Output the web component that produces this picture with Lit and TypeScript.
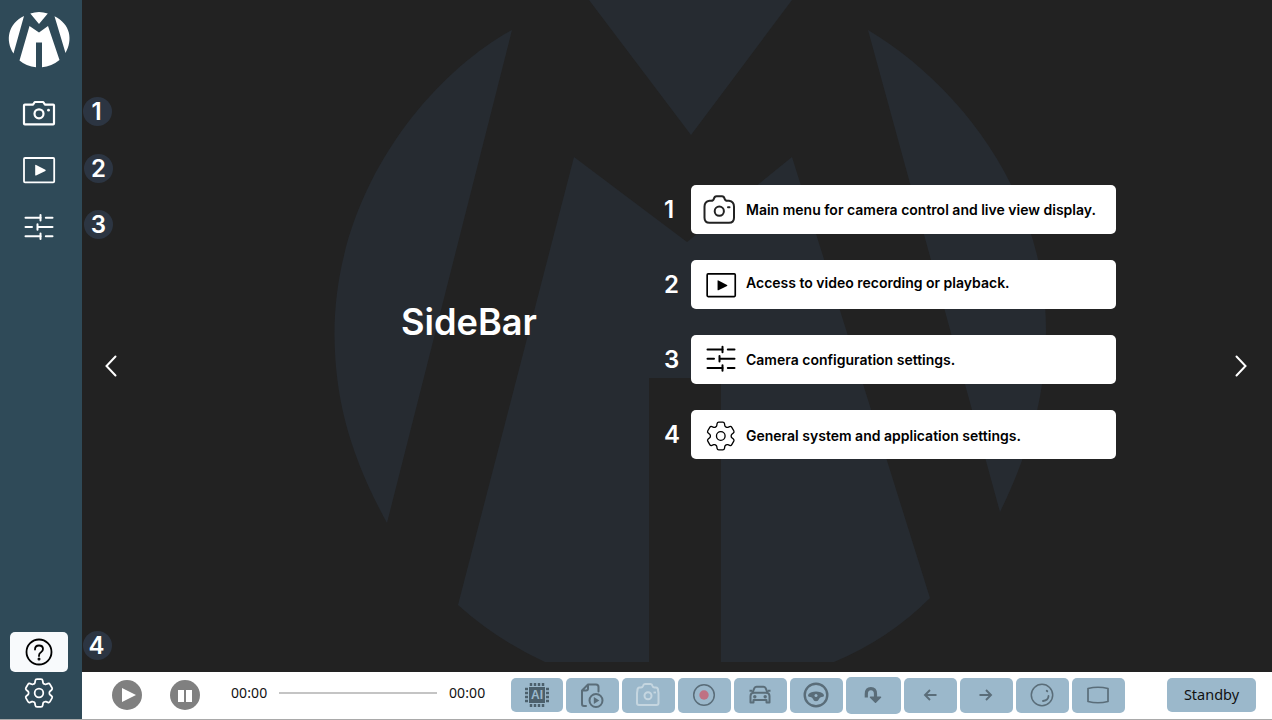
import { LitElement, html, css, svg } from "lit";
import { customElement } from "lit/decorators.js";
import { classMap } from "lit/directives/class-map.js";

const GEAR =
  "M9.594 3.94c.09-.542.56-.94 1.11-.94h2.593c.55 0 1.02.398 1.11.94l.213 1.281c.063.374.313.686.645.87.074.04.147.083.22.127.325.196.72.257 1.075.124l1.217-.456a1.125 1.125 0 0 1 1.37.49l1.296 2.247a1.125 1.125 0 0 1-.26 1.431l-1.003.827c-.293.241-.438.613-.43.992a7.723 7.723 0 0 1 0 .255c-.008.378.137.75.43.991l1.004.827c.424.35.534.955.26 1.43l-1.298 2.247a1.125 1.125 0 0 1-1.369.491l-1.217-.456c-.355-.133-.75-.072-1.076.124a6.47 6.47 0 0 1-.22.128c-.331.183-.581.495-.644.869l-.213 1.281c-.09.543-.56.94-1.11.94h-2.594c-.55 0-1.019-.398-1.11-.94l-.213-1.281c-.062-.374-.312-.686-.644-.87a6.52 6.52 0 0 1-.22-.127c-.325-.196-.72-.257-1.076-.124l-1.217.456a1.125 1.125 0 0 1-1.369-.49l-1.297-2.247a1.125 1.125 0 0 1 .26-1.431l1.004-.827c.292-.24.437-.613.43-.991a6.932 6.932 0 0 1 0-.255c.007-.38-.138-.751-.43-.992l-1.004-.827a1.125 1.125 0 0 1-.26-1.43l1.297-2.247a1.125 1.125 0 0 1 1.37-.491l1.216.456c.356.133.751.072 1.076-.124.072-.044.146-.086.22-.128.332-.183.582-.495.644-.869l.214-1.28Z";

const gear = (w: number) => svg`
  <g transform="translate(-1.500 -1) scale(1.54)" fill="none" stroke="currentColor" stroke-width=${w}>
    <path d=${GEAR} /><circle cx="12" cy="12" r="2.8" />
  </g>`;

const sliders = svg`
  <g fill="none" stroke="currentColor" stroke-width="2" stroke-linecap="round">
    <path d="M3.500 7.700h15M23.800 7.700h6.700M3.500 17h6.500M16 17h14.500M3.500 26.300h15M23.800 26.300h6.700" />
    <path d="M18.500 5v5.500M15.500 14.200v5.600M18.500 23.500v5.500" />
  </g>`;

const film = svg`
  <rect x="2" y="5" width="30.200" height="24.300" rx="1" fill="none" stroke="currentColor" stroke-width="1.800" />
  <path d="M13.200 12.400v9.600q0 .900 .900 .500l9.300-4.600q.700-.600 0-1.100l-9.300-4.800q-.900-.400-.900.400Z" fill="currentColor" />`;

@customElement("app-root")
export class AppRoot extends LitElement {
  static styles = css`
    :host {
      display: flex;
      width: 1272px;
      height: 720px;
      box-sizing: border-box;
      border-bottom: 1px solid #a9a9a9;
      overflow: hidden;
      font-family: Inter, sans-serif;
      background: #fff;
    }
    svg { display: block; flex: none; overflow: visible; }
    .sidebar {
      width: 82px;
      flex: none;
      box-sizing: border-box;
      padding: 12px 4px 0 0;
      background: #2f4a58;
      color: #fff;
      display: flex;
      flex-direction: column;
      align-items: center;
    }
    .nav { display: flex; flex-direction: column; gap: 21px; margin-top: 28px; }
    .bottom { margin-top: auto; display: flex; flex-direction: column; align-items: center; }
    .help {
      width: 58px;
      height: 40px;
      border-radius: 5px;
      background: #f8fafc;
      color: #000;
      display: flex;
      align-items: center;
      justify-content: center;
    }
    .bottom .gear { margin: 3px 0 8px; }
    .right { flex: 1; display: flex; flex-direction: column; min-width: 0; }
    .stage {
      position: relative;
      height: 672px;
      box-sizing: border-box;
      background: #222;
      color: #fff;
      display: flex;
      align-items: center;
      padding: 0 25px 0 23px;
    }
    .mark { position: absolute; inset: 0; }
    .badge {
      position: absolute;
      width: 29px;
      height: 29px;
      box-sizing: border-box;
      border-radius: 50%;
      background: #2c3542;
      font-size: 24px;
      font-weight: 600;
      line-height: 29px;
      text-align: center;
    }
    .b1 { left: 1px; top: 97px; padding-right: 2px; }
    .b2 { left: 2px; top: 154px; }
    .b3 { left: 2px; top: 210px; }
    .b4 { left: 1px; top: 631px; padding-right: 2px; }
    .chev { margin-top: 60px; position: relative; }
    .title {
      position: relative;
      width: 244px;
      margin: 0 0 28px 284px;
      font-size: 36.2px;
      font-weight: 600;
      line-height: 44px;
      white-space: nowrap;
    }
    .list {
      position: relative;
      display: flex;
      flex-direction: column;
      gap: 26px;
      margin: 0 auto 28px 19px;
    }
    .row { display: flex; align-items: center; height: 49px; }
    .num { width: 27px; font-size: 24px; font-weight: 600; line-height: 49px; }
    .card {
      width: 425px;
      height: 49px;
      box-sizing: border-box;
      padding-left: 12px;
      border-radius: 5px;
      background: #fff;
      color: #000;
      display: flex;
      align-items: center;
      gap: 9px;
      font-size: 14px;
      font-weight: 600;
      white-space: nowrap;
    }
    .card.up span { padding-bottom: 4px; }
    .card.down span { padding-top: 2px; }
    .player {
      flex: 1;
      display: flex;
      align-items: center;
      padding: 0 16px 1px 30px;
      font-family: "Noto Sans", sans-serif;
      font-size: 14px;
      color: #111;
    }
    .pause { margin-left: 28px; }
    .time { width: 36px; line-height: 20px; padding-bottom: 4px; letter-spacing: 0.1px; white-space: nowrap; }
    .time.start { margin-left: 31px; }
    .track { width: 158px; height: 2px; margin: 0 12px 4px; background: #c4c4c4; }
    .tools { display: flex; align-items: center; gap: 3px; margin-left: 26px; }
    .tool {
      width: 53px;
      height: 35px;
      box-sizing: border-box;
      padding-right: 1px;
      border-radius: 5px;
      background: #9bb8cb;
      color: #5a6d79;
      display: flex;
      align-items: center;
      justify-content: center;
    }
    .tool.first { width: 52px; height: 34px; margin-bottom: 1px; padding: 0; }
    .tool.big { width: 55px; height: 37px; }
    .chip { font: 700 12px "Liberation Sans", sans-serif; }
    .standby {
      width: 89px;
      height: 34px;
      margin: 0 0 1px auto;
      border-radius: 5px;
      background: #9bb8cb;
      font-size: 14.5px;
      line-height: 33px;
      text-align: center;
    }
  `;

  private tools = [
    svg`<rect x="9" y="9" width="16" height="16" fill="#4c606c" />
      <path d="M11 5v3M15 5v3M19 5v3M23 5v3M11 26v3M15 26v3M19 26v3M23 26v3M5 11h3M5 15h3M5 19h3M5 23h3M26 11h3M26 15h3M26 19h3M26 23h3" stroke="#4c606c" stroke-width="2.500" />
      <text class="chip" x="17" y="21.300" text-anchor="middle" fill="#9bb8cb">AI</text>`,
    svg`<g fill="none" stroke="currentColor" stroke-width="2" stroke-linejoin="round" stroke-linecap="round">
      <path d="M11 28H9q-2 0-2-2V12.500l6-6H21q2.500 0 2.500 2.500v4.500M7 12.500h4q2 0 2-2V6.500" />
      <circle cx="21" cy="22.500" r="6.500" /></g><path d="M18.800 19v7l5.500-3.500Z" fill="currentColor" />`,
    svg`<g fill="none" stroke="#c5d6e0" stroke-width="2" stroke-linejoin="round">
      <path d="M6.500 12q0-2.500 2-2.500h1.500q1.500 0 2-1.500.500-2 2-2h5.500q1.500 0 2 2 .500 1.500 2 1.500h1.500q2 0 2 2.500l.500 3v10q0 2-2 2H8q-2 0-2-2v-10Z" />
      <circle cx="17" cy="17.800" r="3.500" /></g><path d="M22.500 14.500h2.500" stroke="#c5d6e0" stroke-width="1.800" />`,
    svg`<circle cx="17" cy="17" r="10.300" fill="none" stroke="currentColor" stroke-width="1.500" /><circle cx="17" cy="17" r="4.700" fill="#bf7183" />`,
    svg`<g fill="none" stroke="currentColor" stroke-width="2" stroke-linejoin="round">
      <path d="M9.500 14.500 11.500 9.900q.600-1.200 2-1.200h7q1.400 0 2 1.200l2 4.600M7.500 24.500v-6.500q0-3.300 3.500-3.300h12q3.500 0 3.500 3.300v6.500h-3v-2.500h-13v2.500ZM6.500 12.700h2.500M25 12.700h2.500" /></g>
      <circle cx="11.800" cy="18.700" r="1.700" fill="currentColor" /><circle cx="22.200" cy="18.700" r="1.700" fill="currentColor" />`,
    svg`<circle cx="17" cy="17" r="11.300" fill="none" stroke="currentColor" stroke-width="2.400" />
      <path d="M9 18q0-2.500 3.500-3.700 4.500-1.500 9 0 3.500 1.200 3.500 3.700-.500 1-2.500 1-2 .300-2.500 2-.600 2.300-3 2.300t-3-2.300q-.500-1.700-2.500-2-2 0-2.500-1Z" fill="currentColor" /><circle cx="17" cy="17.500" r="1.500" fill="#9bb8cb" />`,
    svg`<path d="M10.300 19.500v-3.500q0-5.300 4.600-5.300t4.600 5.300v4.500" fill="none" stroke="currentColor" stroke-width="3.200" />
      <path d="M14.500 19.300h10L19.500 24.300Z" fill="currentColor" stroke="currentColor" stroke-width="1.500" stroke-linejoin="round" />`,
    svg`<path d="M23.500 17H12M17 12l-5 5 5 5" fill="none" stroke="currentColor" stroke-width="1.900" />`,
    svg`<path d="M10.500 17h11.500M17 12l5 5-5 5" fill="none" stroke="currentColor" stroke-width="1.900" />`,
    svg`<g fill="none" stroke="currentColor" stroke-width="1.500" stroke-linecap="round"><circle cx="17" cy="17" r="10.700" />
      <path d="M18 23q5.500-.800 5.500-5M21.700 12.800l.600.500" stroke-width="1.800" /></g>`,
    svg`<path d="M7 10.500q10-2.500 20 0v13q-10 2.500-20 0Z" fill="none" stroke="currentColor" stroke-width="1.700" stroke-linejoin="round" />`,
  ];

  private rows = [
    {
      text: "Main menu for camera control and live view display.",
      shift: "",
      icon: svg`<g fill="none" stroke="#222" stroke-width="2" stroke-linejoin="round" stroke-linecap="round">
        <path d="M6.500 8.800h1.500q2.500 0 3-2.300.500-2.300 2.500-2.300h5.500q2 0 2.500 2.300t3 2.300h1.500q5 .700 5 6v11q0 5-5 5H6.500q-5 0-5-5v-11q0-5.300 5-6Z" />
        <circle cx="16.300" cy="19.200" r="4.600" /><path d="M25 15.200h1.500" /></g>`,
    },
    { text: "Access to video recording or playback.", shift: "up", icon: svg`<g transform="translate(2.300 2.300) scale(.93)">${film}</g>` },
    { text: "Camera configuration settings.", shift: "", icon: svg`<g transform="translate(1 -.2)">${sliders}</g>` },
    { text: "General system and application settings.", shift: "down", icon: svg`<g transform="translate(.8 1.500)">${gear(0.85)}</g>` },
  ];

  render() {
    return html`
      <nav class="sidebar">
        <svg width="60" height="56" viewBox="9 12 60 56" fill="currentColor">
          <path d="M24 16C8 24 5 40 13.500 53.500ZM54.500 16.300C70.500 24 73 40 65.500 53ZM30.300 13.500Q39 10.500 47.800 13.500L39 24Z" />
          <path d="M29.500 26 39 32.500 48 26 59.500 60Q51.500 66.500 42 67.300V42.500H36V67.300Q26.500 66.500 19.500 60.500Z" />
        </svg>
        <div class="nav">
          <svg width="34" height="36" viewBox="0 0 34 36">
            <g fill="none" stroke="currentColor" stroke-width="2.200" stroke-linejoin="round">
              <path d="M2 9.500q0-.800.800-.800H11l1.800-2.700h8.400l1.800 2.700h8.200q.800 0 .800.800v18q0 .800-.800.800H2.800q-.800 0-.800-.800Z" />
              <circle cx="17" cy="17.800" r="4.500" />
            </g>
            <circle cx="26.500" cy="14.200" r="1.400" fill="currentColor" />
          </svg>
          <svg width="34" height="36" viewBox="0 0 34 36">${film}</svg>
          <svg width="34" height="36" viewBox="0 0 34 36">${sliders}</svg>
        </div>
        <div class="bottom">
          <div class="help">
            <svg width="28" height="28" viewBox="0 0 28 28" fill="none" stroke="currentColor" stroke-width="1.800">
              <circle cx="14" cy="14" r="12.500" />
              <path d="M10 11.500Q10 7.500 14 7.500T18 11q0 2-2 3.200T14 17.500V18" stroke-linecap="round" />
              <circle cx="14" cy="21" r=".6" />
            </svg>
          </div>
          <svg class="gear" width="34" height="36" viewBox="0 0 34 36"><g transform="translate(0 .5)">${gear(1.15)}</g></svg>
        </div>
      </nav>
      <div class="right">
        <main class="stage">
          <svg class="mark" width="1190" height="672" viewBox="82 0 1190 672" fill="#262b31">
            <path d="M512 30C430 75 334 190 334.500 335C335 400 350 455 387 523ZM868 30C960 85 1046 195 1046 330C1046 395 1030 450 1000 512ZM589 0H792L691 135Z" />
            <path d="M574 157 687 242 792 157 930 598Q889 639 834 662H721V378H649V662H545Q497 640 458 605Z" />
          </svg>
          ${[1, 2, 3, 4].map((n) => html`<div class="badge b${n}">${n}</div>`)}
          <svg class="chev" width="12" height="22" viewBox="0 0 12 22" fill="none" stroke="#fff" stroke-width="2">
            <path d="M10.500 1.500 1.500 11 10.500 20.500" stroke-linecap="round" />
          </svg>
          <div class="title">SideBar</div>
          <div class="list">
            ${this.rows.map(
              (r, i) => html`<div class="row">
                <div class="num">${i + 1}</div>
                <div class=${classMap({ card: true, up: r.shift === "up", down: r.shift === "down" })}>
                  <svg width="34" height="36" viewBox="0 0 34 36">${r.icon}</svg><span>${r.text}</span>
                </div>
              </div>`
            )}
          </div>
          <svg class="chev" width="12" height="22" viewBox="0 0 12 22" fill="none" stroke="#fff" stroke-width="2">
            <path d="m1.500 1.500 9 9.500-9 9.500" stroke-linecap="round" />
          </svg>
        </main>
        <footer class="player">
          <svg width="30" height="30" viewBox="0 0 30 30"><circle cx="15" cy="15" r="15" fill="#808080" /><path d="M10 8v14l14-7Z" fill="#fff" /></svg>
          <svg class="pause" width="30" height="30" viewBox="0 0 30 30"><circle cx="15" cy="15" r="15" fill="#808080" /><path d="M8 10h6v12H8zM16 10h6v12h-6z" fill="#fff" /></svg>
          <div class="time start">00:00</div>
          <div class="track"></div>
          <div class="time">00:00</div>
          <div class="tools">
            ${this.tools.map(
              (t, i) => html`<div class=${classMap({ tool: true, first: i === 0, big: i === 6 })}>
                <svg width="34" height="34" viewBox="0 0 34 34">${t}</svg>
              </div>`
            )}
          </div>
          <div class="standby">Standby</div>
        </footer>
      </div>
    `;
  }
}
